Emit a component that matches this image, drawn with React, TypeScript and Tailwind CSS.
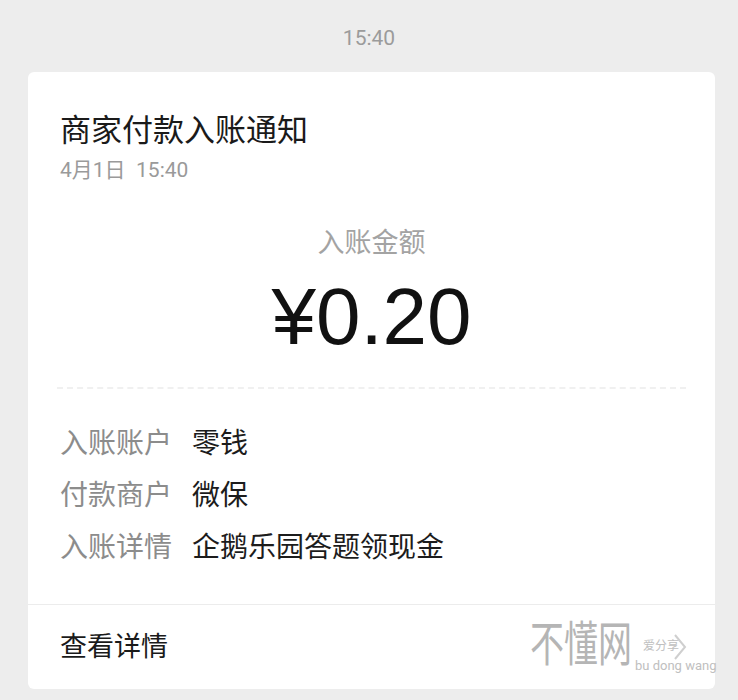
import React from 'react';

const rows = [
  { label: '入账账户', value: '零钱' },
  { label: '付款商户', value: '微保' },
  { label: '入账详情', value: '企鹅乐园答题领现金' },
];

const font = { fontFamily: 'Roboto, "Noto Sans CJK SC", sans-serif' };

const App: React.FC = () => {
  return (
    <div className="relative h-[700px] w-[738px] overflow-hidden bg-[#ededed]" style={font}>
      {/* Chat time */}
      <div className="pt-[24px] text-center text-[21px] leading-[28px] text-[#9b9b9b]">15:40</div>

      {/* Notice card */}
      <div className="ml-[28px] mt-[20px] w-[687px] rounded-md bg-white">
        <div className="px-[32px] pt-[41px]">
          <h1 className="text-[31px] leading-[36px] font-normal text-[#1a1a1a]">商家付款入账通知</h1>
          <p className="mt-[8px] text-[21px] leading-[26px] text-[#9a9a9a]">4月1日&nbsp;&nbsp;15:40</p>

          <p className="mt-[44px] text-center text-[27px] leading-[32px] text-[#a3a3a3]">入账金额</p>
          <p
            className="mt-[18px] text-center text-[80px] leading-[80px] text-[#111]"
            style={{ fontFamily: '"Liberation Sans", Roboto, sans-serif' }}
          >
            ¥0.20
          </p>

          <div className="mx-[-3px] mt-[30px] border-t-2 border-dashed border-[#f0f0f0]" />

          <div className="mt-[29px]">
            {rows.map((row) => (
              <div key={row.label} className="flex h-[52px] items-center text-[28px] leading-[52px]">
                <span className="w-[112px] whitespace-nowrap text-[#8c8c8c]">{row.label}</span>
                <span className="ml-[20px] whitespace-nowrap text-[#1c1c1c]">{row.value}</span>
              </div>
            ))}
          </div>
        </div>

        <div className="mt-[30px] border-t border-[#ececec]" />

        {/* Footer link */}
        <div className="flex h-[84px] items-center justify-between pl-[32px] pr-[28px]">
          <span className="text-[27px] text-[#1a1a1a]">查看详情</span>
          <svg width="14" height="28" viewBox="0 0 14 28" fill="none">
            <polyline points="2,2 12,14 2,26" stroke="#cfcfcf" strokeWidth="2" />
          </svg>
        </div>
      </div>

      {/* Watermark */}
      <div className="pointer-events-none absolute left-[530px] top-[628px] flex items-end gap-[3px] whitespace-nowrap text-[#b5b5b5]">
        <span
          className="origin-bottom scale-y-[1.4] text-[34px] leading-[46px]"
          style={{ fontFamily: '"Noto Sans CJK SC", sans-serif', textShadow: '1px 1px 0 #fff' }}
        >
          不懂网
        </span>
        <div className="flex flex-col pb-[2px] leading-none">
          <span className="ml-[8px] text-[12px] text-[#c0c0c0]">爱分享</span>
          <span className="mt-[7px] text-[13px] text-[#c0c0c0]">bu dong wang</span>
        </div>
      </div>
    </div>
  );
};

export default App;
